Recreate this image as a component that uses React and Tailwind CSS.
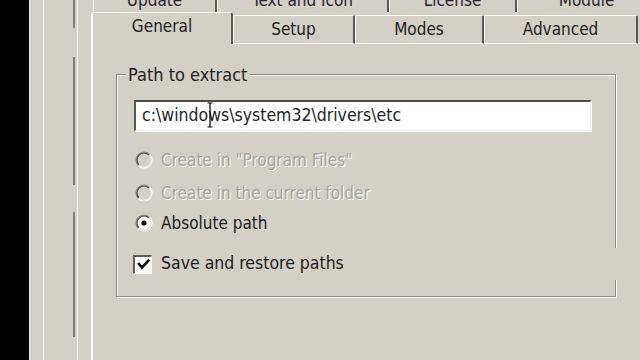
import React from "react";

const FONT = { fontFamily: '"DejaVu Sans Condensed", "DejaVu Sans", "Liberation Sans", sans-serif', fontStretch: "condensed" };

function Radio({ checked, disabled }) {
  return (
    <svg width="18" height="18" viewBox="0 0 18 18" className="shrink-0">
      <circle cx="9" cy="9" r="7" fill={disabled ? "#d3d0c8" : "#ffffff"} />
      <path d="M3.34 14.66 A8 8 0 0 1 14.66 3.34" stroke="#8a8883" strokeWidth="1.2" fill="none" />
      <path d="M4.05 13.95 A7 7 0 0 1 13.95 4.05" stroke="#4a4a48" strokeWidth="1.2" fill="none" />
      <path d="M14.66 3.34 A8 8 0 0 1 3.34 14.66" stroke="#ffffff" strokeWidth="1.2" fill="none" />
      <path d="M13.95 4.05 A7 7 0 0 1 4.05 13.95" stroke="#e4e2dc" strokeWidth="1.2" fill="none" />
      {checked && <circle cx="9" cy="9" r="2.6" fill="#111" />}
    </svg>
  );
}

function Checkbox() {
  return (
    <div className="w-[19px] h-[19px] shrink-0 border-t-2 border-l-2 border-t-[#5e5d5a] border-l-[#5e5d5a] border-b border-r border-b-white border-r-white bg-white flex items-center justify-center">
      <svg width="15" height="15" viewBox="0 0 15 15">
        <path d="M3 7 L6 10.5 L12.5 3.5" stroke="#111" strokeWidth="2.6" fill="none" strokeLinecap="square" />
      </svg>
    </div>
  );
}

function UpperTab({ w, label }) {
  return (
    <div className={`${w} h-full shrink-0 border-l border-l-white border-r-2 border-r-[#5a5956] flex items-end justify-center overflow-hidden`}>
      <span className="text-[17px] leading-[17px] text-[#2a2630] mb-[3px] whitespace-nowrap">{label}</span>
    </div>
  );
}

function LowerTab({ w, label }) {
  return (
    <div className={`${w} h-[29px] shrink-0 border-t border-t-white border-l border-l-white border-r-2 border-r-[#5a5956] border-b border-b-white rounded-t-[2px] flex items-center justify-center`}>
      <span className="text-[17px] leading-none text-[#222] whitespace-nowrap">{label}</span>
    </div>
  );
}

export default function App() {
  return (
    <div className="w-[640px] h-[360px] overflow-hidden bg-[#d3d0c8] flex" style={FONT}>
      {/* left decorative strip */}
      <div className="w-[29px] h-full bg-black shrink-0" />
      <div className="w-[14px] h-full border-l border-l-[#eeede8] shrink-0" />
      <div className="w-[30px] h-full border-l border-l-white shrink-0" />
      <div className="w-[2px] h-full flex flex-col shrink-0">
        <div className="h-[28px] bg-[#7f7d78]" />
        <div className="h-[29px]" />
        <div className="h-[128px] bg-[#7f7d78]" />
        <div className="h-[27px]" />
        <div className="h-[125px] bg-[#7f7d78]" />
      </div>
      <div className="w-[2px] h-full shrink-0" />
      <div className="w-[14px] h-full border-l border-l-white shrink-0" />

      {/* tab control */}
      <div className="flex-1 h-full flex flex-col min-w-0">
        {/* upper row */}
        <div className="h-[12px] flex pl-[2px] shrink-0">
          <UpperTab w="w-[124px]" label="Update" />
          <UpperTab w="w-[172px]" label="Text and Icon" />
          <UpperTab w="w-[128px]" label="License" />
          <UpperTab w="w-[140px]" label="Module" />
        </div>
        {/* lower row */}
        <div className="h-[32px] flex items-end shrink-0">
          <div className="w-[142px] h-[32px] shrink-0 border-t border-t-white border-l-2 border-l-white border-r-2 border-r-[#5a5956] rounded-t-[3px] flex items-start justify-center pt-[5px]">
            <span className="text-[17px] leading-none text-[#222]">General</span>
          </div>
          <LowerTab w="w-[122px]" label="Setup" />
          <LowerTab w="w-[129px]" label="Modes" />
          <LowerTab w="w-[154px]" label="Advanced" />
          <div className="flex-1 border-b border-b-white" />
        </div>
        {/* panel */}
        <div className="flex-1 border-l-2 border-l-white pl-[23px] pt-[30px]">
          <div className="relative w-[500px] h-[223px] border border-[#8c8a85] shadow-[inset_1px_1px_0_#fff,1px_1px_0_#fff] flex flex-col pl-[17px] pt-[25px]">
            <div className="absolute -top-[10px] left-[9px] px-[2px] bg-[#d3d0c8] text-[18px] leading-[20px] text-[#222]">
              Path to extract
            </div>
            <div className="absolute top-[173px] -right-[3px] w-[4px] h-[32px] bg-[#d3d0c8]" />

            {/* input */}
            <div className="relative w-[457px] h-[31px] bg-white border-t-2 border-l-2 border-t-[#4d4c49] border-l-[#55544f] border-b border-r border-b-[#f4f3ef] border-r-[#f4f3ef] shadow-[1px_1px_0_#fff] flex items-center pl-[6px]">
              <span className="text-[17.5px] leading-none text-[#1e1e1e] whitespace-nowrap">c:\windows\system32\drivers\etc</span>
              <svg className="absolute left-[70px] top-[0px]" width="8" height="27" viewBox="0 0 8 27">
                <path d="M4 1 L4 25" stroke="#111" strokeWidth="1.3" />
                <path d="M1.5 1 L6.5 1 M1.5 25 L6.5 25" stroke="#111" strokeWidth="1" />
              </svg>
            </div>

            <div className="flex items-center h-[30px] mt-[14px] pl-[1px] gap-[8px]">
              <Radio disabled />
              <span className="text-[17px] leading-none text-[#a5a49e] [text-shadow:1px_1px_0_#fff] whitespace-nowrap">Create in "Program Files"</span>
            </div>
            <div className="flex items-center h-[30px] mt-[3px] pl-[1px] gap-[8px]">
              <Radio disabled />
              <span className="text-[17px] leading-none text-[#a5a49e] [text-shadow:1px_1px_0_#fff] whitespace-nowrap">Create in the current folder</span>
            </div>
            <div className="flex items-center h-[30px] pl-[1px] gap-[8px]">
              <Radio checked />
              <span className="text-[17px] leading-none text-[#1c1c1c] whitespace-nowrap">Absolute path</span>
            </div>
            <div className="flex items-center h-[30px] mt-[11px] -ml-[1px] gap-[9px]">
              <Checkbox />
              <span className="text-[17.5px] leading-none text-[#1c1c1c] whitespace-nowrap">Save and restore paths</span>
            </div>
          </div>
        </div>
      </div>
    </div>
  );
}
